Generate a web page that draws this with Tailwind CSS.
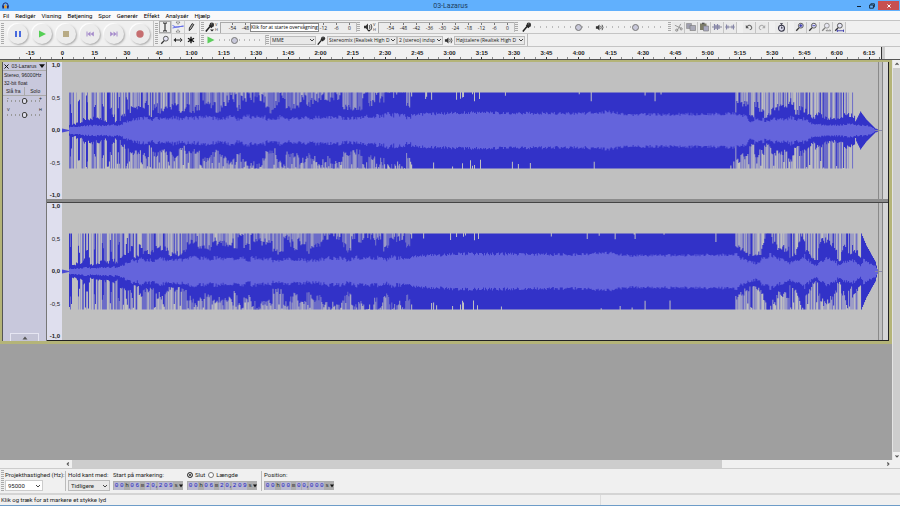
<!DOCTYPE html>
<html lang="da">

<head>
  <meta charset="UTF-8" />
  <meta name="viewport" content="width=device-width, initial-scale=1.0" />
  <title>03-Lazarus</title>
  <script src="https://cdn.jsdelivr.net/npm/@tailwindcss/browser@4"></script>
</head>

<body class="flex h-screen flex-col overflow-hidden bg-[#f0f0f0] font-[Roboto,sans-serif] text-[6px] leading-[8px] text-[#222]">

  <!-- Shared icons -->
  <svg class="hidden">
    <symbol id="mic" viewBox="0 0 10 10">
      <path d="M.8 9.6 5 4.6" stroke="#222" stroke-width="1.5" />
      <circle cx="6.8" cy="2.9" r="2.3" fill="#333" />
      <path d="M4.3 3.2 6.8 5.7" stroke="#222" stroke-width="1.4" />
      <path d="M6 2.2 7.2 1.5" stroke="#aaa" stroke-width=".6" />
    </symbol>
    <symbol id="speaker" viewBox="0 0 10 10">
      <path d="M1 3.7h1.8L5 1.6v6.8L2.8 6.3H1z" fill="#333" />
      <path d="M6.3 3.2q1.2 1.8 0 3.6M7.8 2q2.2 3 0 6" fill="none" stroke="#333" stroke-width=".9" />
    </symbol>
    <symbol id="chevron" viewBox="0 0 6 6">
      <path d="M1 2l2 2 2-2" fill="none" stroke="#444" stroke-width="1" />
    </symbol>
    <symbol id="lens" viewBox="0 0 12 12">
      <path d="M1.5 10.5 5 6.8" stroke="#333" stroke-width="1.6" />
      <circle cx="7" cy="4.4" r="2.9" fill="#e4e4f4" stroke="#444" stroke-width="1" />
    </symbol>
  </svg>

  <!-- Title bar -->
  <header class="flex h-[11px] shrink-0 items-center bg-[#61b0fd]">
    <div class="flex flex-1 pl-[2px]">
      <svg class="size-[7px]" viewBox="0 0 8 8">
        <path d="M1 5.5V4a3 3 0 0 1 6 0v1.5" fill="none" stroke="#1b2a70" stroke-width="1.1" />
        <rect x=".4" y="4" width="2" height="3.4" fill="#1b2a70" />
        <rect x="5.6" y="4" width="2" height="3.4" fill="#1b2a70" />
        <path d="M2.2 5.6 4 2.6l1.8 3L4 7.8z" fill="#f39a1c" />
      </svg>
    </div>
    <h1 class="text-[7px] leading-[10px] text-[#1d3c5c]">03-Lazarus</h1>
    <div class="flex flex-1 justify-end pr-px">
      <button aria-label="Minimer" class="flex h-[9px] w-[12px] items-center justify-center"><span class="mt-[2px] h-px w-[4px] bg-[#123]"></span></button>
      <button aria-label="Gendan" class="flex h-[9px] w-[13px] items-center justify-center">
        <svg class="size-[6px]" viewBox="0 0 6 6"><path d="M1.8 1.8V.8h3.6v3h-1M.6 2h3.8v3.2H.6z" fill="none" stroke="#123" stroke-width=".9" /></svg>
      </button>
      <button aria-label="Luk" class="flex h-[9px] w-[21px] items-center justify-center bg-[#c75050]">
        <svg class="size-[4px]" viewBox="0 0 4 4"><path d="M.4.4l3.2 3.2M3.6.4.4 3.6" stroke="#fff" stroke-width="1" /></svg>
      </button>
    </div>
  </header>

  <!-- Menu -->
  <nav class="flex h-[9px] shrink-0 items-center gap-[6px] bg-[#f9f9fa] pl-[3px] text-black">
    <a href="#">Fil</a>
    <a href="#">Redigér</a>
    <a href="#">Visning</a>
    <a href="#">Betjening</a>
    <a href="#">Spor</a>
    <a href="#">Generér</a>
    <a href="#">Effekt</a>
    <a href="#">Analysér</a>
    <a href="#">Hjælp</a>
  </nav>

  <!-- Toolbars -->
  <div class="flex h-[27px] shrink-0 border-y border-[#c4c4c4] font-['Open_Sans',sans-serif]">
    <div class="flex items-center border-r border-[#c4c4c4]">
      <span class="mx-px h-[22px] w-[3px] bg-[repeating-linear-gradient(#aaa_0_1px,#f0f0f0_1px_2px)]"></span>
      <div class="flex gap-[4px] px-[3px] *:flex *:size-[20px] *:items-center *:justify-center *:rounded-full *:bg-[#ececec] *:shadow-[1px_1px_2px_#aaa,-1px_-1px_1px_#fff]">
        <button aria-label="Pause">
          <svg class="size-[8px]" viewBox="0 0 8 8"><path d="M1 1h2v6H1zM5 1h2v6H5z" fill="#4769dd" /></svg>
        </button>
        <button aria-label="Afspil">
          <svg class="size-[8px]" viewBox="0 0 8 8"><path d="M1 .5 8 4 1 7.5z" fill="#55cf55" /></svg>
        </button>
        <button aria-label="Stop">
          <svg class="size-[8px]" viewBox="0 0 8 8"><path d="M1 1h6v6H1z" fill="#b8ab85" /></svg>
        </button>
        <button aria-label="Spring til start">
          <svg class="size-[8px]" viewBox="0 0 8 8"><path d="M.5 1.5h1v5h-1zM4.5 1.5v5L1.5 4zM7.8 1.5v5L4.6 4z" fill="#a58bcb" /></svg>
        </button>
        <button aria-label="Spring til slut">
          <svg class="size-[8px]" viewBox="0 0 8 8"><path d="M6.5 1.5h1v5h-1zM.2 1.5v5L3.4 4zM3.5 1.5v5L6.5 4z" fill="#a58bcb" /></svg>
        </button>
        <button aria-label="Optag" class="ml-[2px]">
          <svg class="size-[8px]" viewBox="0 0 8 8"><circle cx="4" cy="4" r="3.7" fill="#c66e70" /></svg>
        </button>
      </div>
    </div>

    <div class="flex items-center border-r border-[#c4c4c4]">
      <span class="mx-px h-[22px] w-[3px] bg-[repeating-linear-gradient(#aaa_0_1px,#f0f0f0_1px_2px)]"></span>
      <div class="grid grid-cols-[12px_12px_12px] grid-rows-[12px_12px] gap-px bg-[#ccc] *:flex *:items-center *:justify-center *:bg-[#eee]">
        <button aria-label="Markeringsværktøj" class="border border-[#aaa]">
          <svg class="size-[10px] shrink-0" viewBox="0 0 10 10"><path d="M3 1h1.2L5 1.6 5.8 1H7M3 9h1.2L5 8.4l.8.6H7M5 1.5v7" fill="none" stroke="#111" stroke-width="1" /></svg>
        </button>
        <button aria-label="Envelopeværktøj">
          <svg class="size-[12px]" viewBox="0 0 12 12"><path d="M4 1h4L6 3.4zM4 11h4L6 8.6z" fill="#fff" stroke="#555" stroke-width=".6" /><path d="M.5 4.5Q4 6.5 6 6t5.5-.8M.5 7q4-1 11-2" fill="none" stroke="#6670e8" stroke-width="1" /></svg>
        </button>
        <button aria-label="Tegneværktøj">
          <svg class="size-[10px]" viewBox="0 0 10 10"><path d="m3.4 6 2.8-4.4 1.6 1L5 7.2 3.2 8.6z" fill="#aaa" stroke="#222" stroke-width=".9" /></svg>
        </button>
        <button aria-label="Zoomværktøj">
          <svg class="size-[10px]" viewBox="0 0 12 12"><use href="#lens" /></svg>
        </button>
        <button aria-label="Tidsskifteværktøj">
          <svg class="size-[10px]" viewBox="0 0 10 10"><path d="M.5 5 3 2.8v4.4zM9.5 5 7 2.8v4.4zM2 4.4h6v1.2H2z" fill="#222" /></svg>
        </button>
        <button aria-label="Multiværktøj">
          <svg class="size-[8px]" viewBox="0 0 10 10"><path d="M5 .8v8.4M1.2 2.8l7.6 4.4M8.8 2.8 1.2 7.2" stroke="#111" stroke-width="1.7" /></svg>
        </button>
      </div>
      <span class="w-[2px]"></span>
    </div>

    <div class="flex min-w-0 flex-1 flex-col">
      <!-- Meters, mixer, edit -->
      <div class="flex h-[13px] items-center border-b border-[#c4c4c4]">
        <span class="mx-px h-[10px] w-[3px] bg-[repeating-linear-gradient(#aaa_0_1px,#f0f0f0_1px_2px)]"></span>
        <div class="flex w-[15px] items-center text-[4px] leading-[5px]">
          <svg class="size-[10px]" viewBox="0 0 10 10"><use href="#mic" /><path d="M5 7.5h4L7 9.5z" fill="#222" /></svg>
          <span>V<br>H</span>
        </div>
        <div id="recordMeter" class="relative flex h-[11px] w-[136px] items-center border-l border-t border-[#aaa] bg-[#ececec]">
          <div class="absolute left-[29px] top-0 z-10 flex h-[9px] items-center whitespace-nowrap border border-[#888] bg-white text-[5px] text-black">Klik for at starte overvågning</div>
        </div>
        <span class="mr-[3px] h-[10px] w-[4px] border-l border-[#bbb] bg-[repeating-linear-gradient(#aaa_0_1px,#f0f0f0_1px_2px)]"></span>
        <div class="flex w-[15px] items-center text-[4px] leading-[5px]">
          <svg class="size-[10px]" viewBox="0 0 10 10"><use href="#speaker" /><path d="M4 7.7h4L6 9.700z" fill="#222" /></svg>
          <span>V<br>H</span>
        </div>
        <div id="playMeter" class="flex h-[11px] w-[136px] items-center border-l border-t border-[#aaa] bg-[#ececec]"></div>
        <span class="mr-[4px] h-[10px] w-[4px] border-l border-[#bbb] bg-[repeating-linear-gradient(#aaa_0_1px,#f0f0f0_1px_2px)]"></span>
        <svg class="size-[10px]" viewBox="0 0 10 10"><use href="#mic" /></svg>
        <input type="range" aria-label="Optagelsesstyrke" value="79" class="mx-[2px] h-[8px] w-[59px] appearance-none bg-[repeating-linear-gradient(90deg,#bbb_0_1px,transparent_1px_6px)] bg-[length:100%_2px] bg-center bg-no-repeat [&::-webkit-slider-thumb]:size-[7px] [&::-webkit-slider-thumb]:appearance-none [&::-webkit-slider-thumb]:rounded-full [&::-webkit-slider-thumb]:border [&::-webkit-slider-thumb]:border-[#777] [&::-webkit-slider-thumb]:bg-[#c8c8da]">
        <svg class="size-[9px]" viewBox="0 0 10 10"><use href="#speaker" /></svg>
        <input type="range" aria-label="Afspilningsstyrke" value="50" class="mx-[2px] h-[8px] w-[59px] appearance-none bg-[repeating-linear-gradient(90deg,#bbb_0_1px,transparent_1px_6px)] bg-[length:100%_2px] bg-center bg-no-repeat [&::-webkit-slider-thumb]:size-[7px] [&::-webkit-slider-thumb]:appearance-none [&::-webkit-slider-thumb]:rounded-full [&::-webkit-slider-thumb]:border [&::-webkit-slider-thumb]:border-[#777] [&::-webkit-slider-thumb]:bg-[#c8c8da]">
        <span class="mx-px h-[10px] w-[3px] bg-[repeating-linear-gradient(#aaa_0_1px,#f0f0f0_1px_2px)]"></span>
        <div class="flex *:flex *:h-[11px] *:w-[13px] *:items-center *:justify-center *:border-r *:border-[#c4c4c4] *:bg-[#eaeaea]">
          <button aria-label="Klip">
            <svg class="size-[9px]" viewBox="0 0 10 10"><path d="M1 2.5 8 6M7.5 1l-4 7.5" stroke="#999" stroke-width="1.1" /><circle cx="3" cy="8" r="1.2" fill="none" stroke="#888" /><circle cx="8" cy="6.5" r="1.2" fill="none" stroke="#888" /></svg>
          </button>
          <button aria-label="Kopiér">
            <svg class="size-[10px]" viewBox="0 0 10 10"><path d="M.5 1.5h5v5h-5z" fill="#a0a0b0" stroke="#888" stroke-width=".6" /><path d="M4 3.5h5.5v5H4z" fill="#aaaab8" stroke="#777" stroke-width=".6" /></svg>
          </button>
          <button aria-label="Indsæt">
            <svg class="size-[10px]" viewBox="0 0 10 10"><path d="M1 1.5h6.5V8H1z" fill="#7d7d68" /><path d="M3 .7h2.5v1.5H3z" fill="#555" /><path d="M4.5 4h5v5h-5z" fill="#aaaac0" stroke="#777" stroke-width=".6" /></svg>
          </button>
          <button aria-label="Beskær">
            <svg class="size-[10px]" viewBox="0 0 10 10"><path d="M0 5h10" stroke="#889" /><path d="M2.5 2v6M4 3v4M5.5 2v6M7 3v4" stroke="#8585a8" stroke-width="1.2" /></svg>
          </button>
          <button aria-label="Stilhed">
            <svg class="size-[10px]" viewBox="0 0 10 10"><path d="M0 5h10" stroke="#889" stroke-width=".8" /><path d="M1.5 2.5v5M3 3.5v3M7 3.5v3M8.5 2.5v5" stroke="#8585a8" stroke-width="1.1" /></svg>
          </button>
        </div>
        <div class="ml-[6px] flex *:flex *:h-[11px] *:w-[13px] *:items-center *:justify-center *:border-r *:border-[#c4c4c4] *:bg-[#eaeaea]">
          <button aria-label="Fortryd">
            <svg class="size-[8px]" viewBox="0 0 10 10"><path d="M2 5.5Q5 1 7.5 4T6 8.5" fill="none" stroke="#666" stroke-width="1.3" /><path d="M1 2.5v4h4z" fill="#555" /></svg>
          </button>
          <button aria-label="Gentag">
            <svg class="size-[8px]" viewBox="0 0 10 10"><path d="M8 5.5Q5 1 2.5 4T4 8.5" fill="none" stroke="#aaa" stroke-width="1.3" /><path d="M9 2.5v4H5z" fill="#aaa" /></svg>
          </button>
        </div>
        <div class="ml-[6px] flex *:flex *:h-[11px] *:w-[13px] *:items-center *:justify-center *:border-r *:border-[#c4c4c4] *:bg-[#eaeaea]">
          <button aria-label="Synkroniseringslås">
            <svg class="size-[9px]" viewBox="0 0 10 10"><circle cx="5" cy="5.8" r="3.3" fill="#dde" stroke="#334" stroke-width="1.2" /><path d="M3.5.7h3M5 .7v2M5 6V4M5 6l1.5-.8" stroke="#334" stroke-width=".9" /></svg>
          </button>
        </div>
        <div class="ml-[6px] flex *:flex *:h-[11px] *:w-[13px] *:items-center *:justify-center *:border-r *:border-[#c4c4c4] *:bg-[#eaeaea]">
          <button aria-label="Zoom ind">
            <svg class="size-[10px]" viewBox="0 0 12 12"><use href="#lens" /><path d="M5 4.4h4M7 2.4v4" stroke="#33a" stroke-width="1.3" /></svg>
          </button>
          <button aria-label="Zoom ud">
            <svg class="size-[10px]" viewBox="0 0 12 12"><use href="#lens" /><path d="M5.2 4.4h3.6" stroke="#55b" stroke-width="1.2" /></svg>
          </button>
          <button aria-label="Tilpas markering">
            <svg class="size-[10px] opacity-60" viewBox="0 0 12 12"><use href="#lens" /><path d="M6 10.5h6M7.5 9 6 10.5M10.5 9l1.500 1.500" stroke="#333" stroke-width="1" /></svg>
          </button>
          <button aria-label="Tilpas projekt">
            <svg class="size-[10px]" viewBox="0 0 12 12"><use href="#lens" /><path d="M4 10.5h8M4 9v3M11.5 9v3" stroke="#33a" stroke-width="1" /></svg>
          </button>
        </div>
      </div>

      <!-- Playback speed and devices -->
      <div class="flex h-[12px] items-center">
        <span class="mx-px h-[10px] w-[3px] bg-[repeating-linear-gradient(#aaa_0_1px,#f0f0f0_1px_2px)]"></span>
        <button aria-label="Afspil med hastighed" class="flex w-[12px] justify-center">
          <svg class="size-[8px]" viewBox="0 0 8 8"><path d="M.5.5 7.5 4l-7 3.500z" fill="#5cce5c" /></svg>
        </button>
        <input type="range" aria-label="Afspilningshastighed" value="32" class="mx-[2px] h-[8px] w-[43px] appearance-none bg-[repeating-linear-gradient(90deg,#bbb_0_1px,transparent_1px_5px)] bg-[length:100%_2px] bg-center bg-no-repeat [&::-webkit-slider-thumb]:size-[7px] [&::-webkit-slider-thumb]:appearance-none [&::-webkit-slider-thumb]:rounded-full [&::-webkit-slider-thumb]:border [&::-webkit-slider-thumb]:border-[#777] [&::-webkit-slider-thumb]:bg-[#c8c8da]">
        <span class="mx-px h-[10px] w-[4px] border-l border-[#bbb] bg-[repeating-linear-gradient(#aaa_0_1px,#f0f0f0_1px_2px)]"></span>
        <div class="grid h-[9px] w-[46px] items-center border border-[#bbb] bg-[#e8e8e8]">
          <select aria-label="Lydvært" class="col-start-1 row-start-1 appearance-none pl-px text-[5px] leading-[7px]"><option>MME</option></select>
          <svg class="pointer-events-none col-start-1 row-start-1 size-[6px] justify-self-end"><use href="#chevron" /></svg>
        </div>
        <svg class="mx-px size-[9px]" viewBox="0 0 10 10"><use href="#mic" /></svg>
        <div class="grid h-[9px] w-[70px] items-center border border-[#bbb] bg-[#e8e8e8]">
          <select aria-label="Optageenhed" class="col-start-1 row-start-1 w-full appearance-none pl-px text-[5px] leading-[7px]"><option>Stereomix (Realtek High D</option></select>
          <svg class="pointer-events-none col-start-1 row-start-1 size-[6px] justify-self-end"><use href="#chevron" /></svg>
        </div>
        <div class="grid h-[9px] w-[46px] items-center border border-[#bbb] bg-[#e8e8e8]">
          <select aria-label="Optagekanaler" class="col-start-1 row-start-1 w-full appearance-none pl-px text-[5px] leading-[7px]"><option>2 (stereo) indsp</option></select>
          <svg class="pointer-events-none col-start-1 row-start-1 size-[6px] justify-self-end"><use href="#chevron" /></svg>
        </div>
        <svg class="mx-px size-[9px]" viewBox="0 0 10 10"><use href="#speaker" /></svg>
        <div class="grid h-[9px] w-[71px] items-center border border-[#bbb] bg-[#e8e8e8]">
          <select aria-label="Afspilningsenhed" class="col-start-1 row-start-1 w-full appearance-none pl-px text-[5px] leading-[7px]"><option>Højttalere (Realtek High D</option></select>
          <svg class="pointer-events-none col-start-1 row-start-1 size-[6px] justify-self-end"><use href="#chevron" /></svg>
        </div>
        <span class="ml-[2px] h-full w-px bg-[#bbb]"></span>
      </div>
    </div>
  </div>

  <!-- Timeline -->
  <div class="flex h-[13px] shrink-0 border-b border-[#555] pl-[14px] pr-[15px]">
    <div id="timeline" class="flex flex-1 font-['Liberation_Sans',sans-serif] font-bold text-[#222]"></div>
    <span class="-ml-[4px] h-full w-[4px] border-l border-[#333] bg-[#ccc]"></span>
  </div>

  <!-- Tracks -->
  <main class="flex min-h-0 flex-1 bg-[#9f9f9f]">
    <div class="min-w-0 flex-1">
      <section class="flex border-[2px] border-r-[3px] border-b-[3px] border-[#b4b478]">
        <div class="flex w-[45px] flex-col border-r border-[#777] border-l border-l-[#555] bg-[#c8c8dc] font-['Liberation_Sans',sans-serif] text-[5px] leading-[8px]">
          <div class="flex items-center justify-between border-b border-[#aaa] px-px">
            <button aria-label="Luk spor"><svg class="size-[5px]" viewBox="0 0 5 5"><path d="M.5.5l4 4M4.5.5l-4 4" stroke="#111" /></svg></button>
            <span>03-Lazarus</span>
            <button aria-label="Spormenu"><svg class="size-[6px]" viewBox="0 0 6 6"><path d="M0 1.2h6L3 5z" fill="#111" /></svg></button>
          </div>
          <p class="pl-px">Stereo, 96000Hz</p>
          <p class="pl-px">32-bit float</p>
          <div class="grid grid-cols-2 border-b border-[#aaa]">
            <button class="border-r border-[#aaa]">Slå fra</button>
            <button>Solo</button>
          </div>
          <div class="mx-[4px] flex h-[2px] justify-between leading-[4px]"><span>-</span><span>+</span></div>
          <input type="range" aria-label="Forstærkning" value="50" class="mx-[4px] h-[6px] appearance-none bg-[repeating-linear-gradient(90deg,#999_0_1px,transparent_1px_4px)] bg-[length:100%_2px] bg-center bg-no-repeat [&::-webkit-slider-thumb]:h-[6px] [&::-webkit-slider-thumb]:w-[5px] [&::-webkit-slider-thumb]:appearance-none [&::-webkit-slider-thumb]:rounded-[2px] [&::-webkit-slider-thumb]:border [&::-webkit-slider-thumb]:border-[#444] [&::-webkit-slider-thumb]:bg-[#ddddea]">
          <div class="mx-[4px] mt-[4px] flex h-[4px] justify-between text-[4px] leading-[4px]"><span>V</span><span>H</span></div>
          <input type="range" aria-label="Panorering" value="50" class="mx-[4px] h-[6px] appearance-none bg-[repeating-linear-gradient(90deg,#999_0_1px,transparent_1px_4px)] bg-[length:100%_2px] bg-center bg-no-repeat [&::-webkit-slider-thumb]:h-[6px] [&::-webkit-slider-thumb]:w-[5px] [&::-webkit-slider-thumb]:appearance-none [&::-webkit-slider-thumb]:rounded-[2px] [&::-webkit-slider-thumb]:border [&::-webkit-slider-thumb]:border-[#444] [&::-webkit-slider-thumb]:bg-[#ddddea]">
          <button aria-label="Fold sammen" class="mx-auto mt-auto flex h-[8px] w-[29px] items-center justify-center border border-b-0 border-[#e6e6f2] bg-[#c4c4d6]">
            <svg class="size-[6px]" viewBox="0 0 6 6"><path d="M.5 4.5h5L3 1.5z" fill="#555" /></svg>
          </button>
        </div>
        <div id="channels" class="flex min-w-0 flex-1 flex-col gap-[3px] border-b border-r border-[#222] bg-[#8c8c8c]"></div>
      </section>
    </div>
    <!-- Vertical scrollbar -->
    <div class="flex w-[8px] flex-col items-center border-l border-[#e4e4e4] bg-[#f0f0f0]">
      <svg class="my-px size-[6px]" viewBox="0 0 6 6"><path d="M1.500 3.800 3 2.300l1.500 1.500" fill="none" stroke="#555" stroke-width="1.2" /></svg>
      <span class="w-full flex-1 bg-[#cdcdcd]"></span>
      <svg class="my-px size-[6px]" viewBox="0 0 6 6"><path d="M1.500 2.300 3 3.800l1.500-1.500" fill="none" stroke="#555" stroke-width="1.2" /></svg>
    </div>
  </main>

  <!-- Horizontal scrollbar -->
  <div class="flex h-[9px] shrink-0 items-center border-b border-[#ccc] pl-[64px] pr-[8px]">
    <svg class="mx-px size-[6px]" viewBox="0 0 6 6"><path d="M3.800 1.500 2.300 3l1.500 1.500" fill="none" stroke="#555" stroke-width="1.2" /></svg>
    <div class="h-full flex-1"><div class="h-full w-[80%] bg-[#cdcdcd]"></div></div>
    <svg class="mx-px size-[6px]" viewBox="0 0 6 6"><path d="M2.300 1.500 3.800 3 2.300 4.500" fill="none" stroke="#555" stroke-width="1.2" /></svg>
  </div>

  <!-- Selection bar -->
  <div class="flex h-[26px] shrink-0 items-center border-b-2 border-[#d4d4d4]">
    <span class="mx-px h-[22px] w-[3px] bg-[repeating-linear-gradient(#aaa_0_1px,#f0f0f0_1px_2px)]"></span>
    <div class="flex w-[60px] flex-col gap-px">
      <label for="rate" class="whitespace-nowrap">Projekthastighed (Hz):</label>
      <div class="grid h-[11px] w-[38px] items-center border border-[#ccc] bg-white">
        <select id="rate" class="col-start-1 row-start-1 appearance-none pl-[2px]"><option>95000</option></select>
        <svg class="pointer-events-none col-start-1 row-start-1 mr-px size-[6px] justify-self-end"><use href="#chevron" /></svg>
      </div>
    </div>
    <div class="flex w-[48px] flex-col gap-px border-l border-[#bbb] pl-[2px]">
      <label for="snap" class="whitespace-nowrap">Hold kant med:</label>
      <div class="grid h-[11px] w-[42px] items-center border border-[#bbb] bg-[#e8e8e8]">
        <select id="snap" class="col-start-1 row-start-1 appearance-none pl-[2px]"><option>Tidligere</option></select>
        <svg class="pointer-events-none col-start-1 row-start-1 mr-px size-[6px] justify-self-end"><use href="#chevron" /></svg>
      </div>
    </div>
    <div class="flex w-[74px] flex-col gap-px">
      <span class="whitespace-nowrap">Start på markering:</span>
      <div class="flex h-[11px] w-[70px] items-center" data-time="00h06m20,209s"></div>
    </div>
    <div class="flex w-[74px] flex-col gap-px">
      <div class="flex gap-[3px]">
        <label class="flex items-center gap-[2px]"><input type="radio" name="end" checked class="size-[6px] appearance-none rounded-full border border-[#444] bg-white checked:bg-[#222] checked:shadow-[inset_0_0_0_1px_#fff]">Slut</label>
        <label class="flex items-center gap-[2px]"><input type="radio" name="end" class="size-[6px] appearance-none rounded-full border border-[#777] bg-white">Længde</label>
      </div>
      <div class="flex h-[11px] w-[70px] items-center" data-time="00h06m20,209s"></div>
    </div>
    <div class="flex flex-col gap-px border-l border-[#bbb] pl-[2px]">
      <span>Position:</span>
      <div class="flex h-[11px] w-[70px] items-center" data-time="00h00m00,000s"></div>
    </div>
  </div>

  <!-- Status bar -->
  <footer class="flex h-[11px] shrink-0 items-center border-b border-[#6d9cc8] pl-px">
    <p class="w-2/3">Klik og træk for at markere et stykke lyd</p>
    <span class="h-full w-px bg-[#ddd]"></span>
  </footer>

  <script>
    // Timeline labels, one every 15 seconds
    let html = '';
    for (let s = -15; s <= 375; s += 15) {
      const label = s < 60 ? s : Math.floor(s / 60) + ':' + String(s % 60).padStart(2, '0');
      html += `<div class="flex min-w-0 flex-1 flex-col items-center justify-between">
        <span class="pt-[2px]">${label}</span>
        <span class="flex h-[2px] w-full justify-around"><i class="w-px bg-[#888]"></i><i class="w-px bg-[#333]"></i><i class="w-px bg-[#888]"></i></span>
      </div>`;
    }
    document.getElementById('timeline').innerHTML = html;

    // Level meters
    function meter(id, hidden) {
      let cells = '';
      for (let db = -54; db <= 0; db += 6) {
        const text = hidden.includes(db) ? '' : db;
        cells += `<div class="flex h-full w-[13px] shrink-0 flex-col items-center text-[5px] leading-[7px]"><i class="h-[2px] w-px shrink-0 bg-[#777]"></i>${text}</div>`;
      }
      document.getElementById(id).insertAdjacentHTML('beforeend', '<div class="flex h-full w-full justify-end">' + cells + '</div>');
    }
    meter('recordMeter', [-42, -36, -30, -24, -18]);
    meter('playMeter', []);

    // Time fields
    document.querySelectorAll('[data-time]').forEach(el => {
      const chars = [...el.dataset.time].map(c => {
        if (/\d/.test(c)) return `<span class="w-[5px] bg-[#b8b8d0] text-center text-[#2222c0]">${c}</span>`;
        if (c === ',') return `<span class="flex w-[2px] justify-center text-[#2222c0]">,</span>`;
        return `<span class="w-[5px] text-center text-[#222]">${c}</span>`;
      }).join('');
      el.innerHTML = `<div class="flex h-[9px] w-full items-center justify-between bg-[#adadad] pl-px font-['Liberation_Mono',monospace] text-[6px] leading-[8px]">${chars}<svg class="h-[8px] w-[4px]" viewBox="0 0 4 8"><path d="M0 2.5h4l-2 3z" fill="#111"/></svg></div>`;
    });

    // Waveforms
    let seed = 7;
    function rnd() {
      seed = (seed * 16807) % 2147483647;
      return seed / 2147483647;
    }

    // linear interpolation between [x, value] points
    function at(points, x) {
      for (let i = 1; i < points.length; i++) {
        const [x0, v0] = points[i - 1], [x1, v1] = points[i];
        if (x <= x1) return v0 + (v1 - v0) * (x - x0) / (x1 - x0);
      }
      return 0;
    }

    const channels = [
      {
        peak: [[7, 8], [58, 11], [70, 19], [120, 23], [180, 29], [250, 26], [300, 29], [350, 34], [351, 38], [674, 38], [675, 21], [700, 18], [725, 24], [735, 22], [750, 14], [796, 11], [800, 19], [806, 11], [815, 2], [818, 1]],
        rms: [[7, 4], [58, 6], [72, 12], [130, 14], [250, 13], [350, 16], [400, 18], [520, 17], [546, 19], [570, 16], [674, 17], [690, 11], [740, 13], [755, 6], [796, 6], [806, 6], [815, 1], [818, 0]],
        fill: [[7, .55], [65, .6], [130, .7], [250, .78], [349, .85], [350, 1], [675, 1], [676, .62], [750, .5], [800, .5]],
        end: 796
      },
      {
        peak: [[7, 8], [58, 11], [70, 20], [120, 23], [180, 28], [250, 26], [300, 28], [350, 33], [351, 38], [674, 38], [675, 22], [700, 16], [708, 32], [725, 18], [742, 30], [755, 14], [762, 28], [778, 15], [787, 26], [800, 14], [801, 38], [806, 26], [815, 10], [817, 2], [818, 1]],
        rms: [[7, 3], [58, 5], [72, 12], [130, 14], [250, 12], [350, 15], [400, 18], [520, 17], [546, 19], [570, 16], [674, 17], [695, 9], [710, 16], [728, 10], [744, 15], [757, 7], [765, 14], [780, 7], [789, 14], [800, 6], [803, 13], [815, 6], [818, 0]],
        fill: [[7, .5], [65, .6], [130, .7], [250, .75], [349, .85], [350, 1], [675, 1], [676, .6], [800, .55]],
        end: 798
      }
    ];

    function wave(ch) {
      let pale = '', mid = '', body = '', rms = '';
      let swell = 1, left = 0;
      for (let x = 7; x < 818; x++) {
        const dense = x >= 350 && x < 675;
        let top = at(ch.peak, x), bottom = top;
        const f = at(ch.fill, x);
        if (left-- <= 0) {
          swell = .72 + rnd() * .65;
          left = 2 + rnd() * 4;
        }
        if (dense) {
          const notch = x < 420 ? .1 : .03;
          if (rnd() < notch) top = 29 + rnd() * 8;
          if (rnd() < notch) bottom = 29 + rnd() * 8;
        } else if (x < ch.end) {
          const beat = x < 70 && x % 8 < 2 ? 8 + rnd() * 16 : 0;
          top = Math.min(38, top * swell * (.85 + rnd() * .3) + beat);
          bottom = Math.min(38, bottom * swell * (.85 + rnd() * .3) + beat);
          const k = rnd();
          if (k < f * .2) { top = 38; bottom = 30 + rnd() * 8; }
          if (k > 1 - f) {
            const spike = `M${x} 30.5h1v76h-1z`;
            if (rnd() < .5) pale += spike; else mid += spike;
          }
        }
        body += `M${x} ${(68.5 - top).toFixed(1)}h1V${(68.5 + bottom).toFixed(1)}h-1z`;
        const wobble = dense ? .9 + rnd() * .18 : (.78 + rnd() * .3) * (.6 + swell * .4);
        const r = at(ch.rms, x) * wobble;
        rms += `M${x} ${(68.5 - r).toFixed(1)}h1v${(2 * r).toFixed(1)}h-1z`;
      }
      return `<svg class="h-[137px] min-w-0 flex-1 bg-[#c0c0c0]" viewBox="0 0 828 137" preserveAspectRatio="none">
        <path d="${pale}" fill="#9c9cc6"/>
        <path d="${mid}" fill="#6c6cc8"/>
        <path d="${body}" fill="#3232c8"/>
        <path d="${rms}" fill="#6464dc"/>
        <path d="M0 66.5 7 68v1l-7 1.500z" fill="#4a4ad4"/>
        <path d="M815 68h8v1h-8z" fill="#8888aa"/>
        <path d="M818 0h1v137h-1zM822 0h1v137h-1z" fill="#888"/>
        <path d="M823 0h5v137h-5z" fill="#d6d6d6"/>
      </svg>`;
    }

    document.getElementById('channels').innerHTML = channels.map(ch => `
      <div class="flex border-[#444] last:border-t">
        <div class="flex w-[15px] flex-col justify-between bg-[#dfdfee] pr-[2px] text-right font-['Liberation_Sans',sans-serif] text-[6px] leading-[7px]">
          <b>1,0</b><span>0,5</span><b>0,0</b><span>-0,5</span><b>-1,0</b>
        </div>
        ${wave(ch)}
      </div>`).join('');
  </script>

</body>

</html>
